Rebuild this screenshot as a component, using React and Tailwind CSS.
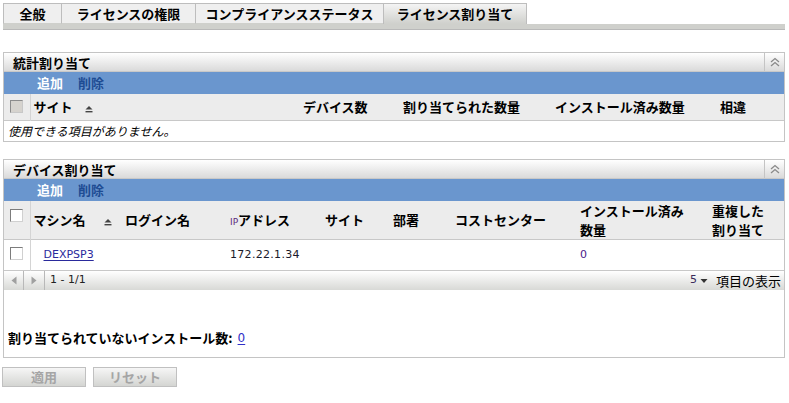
import React from "react";

const jp = "font-['Noto_Sans_CJK_JP','Noto_Sans',sans-serif]";
const latin = "font-['DejaVu_Sans',sans-serif]";

const SortIcon = ({ className = "" }) => (
  <svg width="8" height="8" viewBox="0 0 8 8" className={`inline-block ${className}`}>
    <polygon points="0.5,4.5 4,1 7.5,4.5" fill="#444" />
    <rect x="0.5" y="6" width="7" height="1.4" fill="#444" />
  </svg>
);

const CollapseButton = () => (
  <div className="w-[20px] h-full border-l border-[#c4c4c4] flex items-center justify-center">
    <svg width="10" height="10" viewBox="0 0 10 10">
      <polyline points="1,5 5,1.5 9,5" fill="none" stroke="#8a8a8a" strokeWidth="1.3" />
      <polyline points="1,9 5,5.5 9,9" fill="none" stroke="#8a8a8a" strokeWidth="1.3" />
    </svg>
  </div>
);

const Checkbox = ({ disabled }) => (
  <div
    className={`w-[13px] h-[13px] border ${
      disabled
        ? "border-[#8c8c8c] bg-[#d6d3ce] border-r-[#c8c8c8] border-b-[#c8c8c8]"
        : "border-[#7c7c7c] bg-white border-r-[#d0d0d0] border-b-[#d0d0d0]"
    }`}
  />
);

const PanelHeader = ({ title }) => (
  <>
    <div className="h-[19px] flex bg-gradient-to-b from-white to-[#dadada] border-b border-[#c8c8c8]">
      <div className="flex-1 pl-[9px] font-bold text-[13px] leading-[19px] text-black">{title}</div>
      <CollapseButton />
    </div>
    <div className="h-[22px] bg-[#6a96ce] flex items-center pl-[33px] gap-[15px] font-bold text-[13px]">
      <span className="text-white">追加</span>
      <span className="text-[#1e4c93]">削除</span>
    </div>
  </>
);

const Tab = ({ label, width, active }) => (
  <div
    className={`${width} flex items-center justify-center font-bold text-[13px] text-black border-t border-l border-[#bdbdbd] ${
      active
        ? "h-[21px] bg-gradient-to-b from-[#f4f4f4] to-[#cfd0cc] border-r"
        : "h-[21px] bg-[#efefef] border-b border-b-[#cfd0cc]"
    }`}
  >
    {label}
  </div>
);

export default function App() {
  return (
    <div className={`w-[789px] h-[403px] bg-white text-black ${jp} text-[13px] overflow-hidden`}>
      {/* tabs */}
      <div className="pt-[3px] pl-[3px] pr-[4px]">
        <div className="flex items-end">
          <Tab label="全般" width="w-[58px]" />
          <Tab label="ライセンスの権限" width="w-[134px]" />
          <Tab label="コンプライアンスステータス" width="w-[188px]" />
          <Tab label="ライセンス割り当て" width="w-[144px]" active />
        </div>
        <div className="h-[6px] bg-[#cfd0cc] border-b border-[#b9b9b9]" />
      </div>

      {/* 統計割り当て */}
      <div className="ml-[3px] mt-[22px] w-[782px] border border-[#c4c4c4]">
        <PanelHeader title="統計割り当て" />
        <table className="table-fixed border-collapse w-full">
          <colgroup>
            <col className="w-[26px]" />
            <col className="w-[270px]" />
            <col className="w-[100px]" />
            <col className="w-[152px]" />
            <col className="w-[165px]" />
            <col className="w-[67px]" />
          </colgroup>
          <thead>
            <tr className="h-[26px] bg-[#ececec] border-b border-[#c8c8c8] font-bold text-[13px]">
              <th className="border-r border-[#d4d4d4] pl-[6px]">
                <Checkbox disabled />
              </th>
              <th className="text-left font-bold pl-[3px]">
                サイト
                <SortIcon className="ml-[12px] align-[-1px]" />
              </th>
              <th className="text-left font-bold pl-[3px]">デバイス数</th>
              <th className="text-left font-bold pl-[3px]">割り当てられた数量</th>
              <th className="text-left font-bold pl-[3px]">インストール済み数量</th>
              <th className="text-left font-bold pl-[3px]">相違</th>
            </tr>
          </thead>
          <tbody>
            <tr className="h-[21px]">
              <td colSpan={6} className="pl-[4px] italic text-[12px]">
                使用できる項目がありません。
              </td>
            </tr>
          </tbody>
        </table>
      </div>

      {/* デバイス割り当て */}
      <div className="ml-[3px] mt-[17px] w-[782px] border border-[#c4c4c4]">
        <PanelHeader title="デバイス割り当て" />
        <table className="table-fixed border-collapse w-full">
          <colgroup>
            <col className="w-[26px]" />
            <col className="w-[92px]" />
            <col className="w-[105px]" />
            <col className="w-[95px]" />
            <col className="w-[68px]" />
            <col className="w-[62px]" />
            <col className="w-[125px]" />
            <col className="w-[123px]" />
            <col className="w-[84px]" />
          </colgroup>
          <thead>
            <tr className="h-[38px] bg-[#ececec] border-b border-[#c8c8c8] text-[13px]">
              <th className="border-r border-[#d4d4d4] pl-[6px] align-top pt-[8px]">
                <Checkbox />
              </th>
              <th className="text-left font-bold pl-[3px]">
                マシン名
                <SortIcon className="ml-[18px] align-[-1px]" />
              </th>
              <th className="text-left font-bold pl-[3px]">ログイン名</th>
              <th className="text-left font-bold pl-[3px]">
                <span className={`${latin} text-[9px] font-normal text-[#5a2a7a]`}>IP</span>アドレス
              </th>
              <th className="text-left font-bold pl-[3px]">サイト</th>
              <th className="text-left font-bold pl-[3px]">部署</th>
              <th className="text-left font-bold pl-[3px]">コストセンター</th>
              <th className="text-left font-bold pl-[3px] leading-[19px]">
                <div>インストール済み</div>
                <div>数量</div>
              </th>
              <th className="text-center font-bold pr-[8px] leading-[19px]">
                <div>重複した</div>
                <div>割り当て</div>
              </th>
            </tr>
          </thead>
          <tbody>
            <tr className="h-[31px] border-b border-[#c8c8c8]">
              <td className="border-r border-[#d4d4d4] pl-[6px] align-top pt-[7px]">
                <Checkbox />
              </td>
              <td className={`pl-[13px] ${latin} text-[11px]`}>
                <span className="text-[#2a2a9c] underline underline-offset-2">DEXPSP3</span>
              </td>
              <td />
              <td className={`pl-[3px] ${latin} text-[11px] tracking-[0.3px] text-[#1a1a2a]`}>172.22.1.34</td>
              <td />
              <td />
              <td />
              <td className={`pl-[3px] ${latin} text-[11px] text-[#4a1a8a]`}>0</td>
              <td />
            </tr>
          </tbody>
        </table>

        {/* pager */}
        <div className="h-[19px] flex items-center bg-gradient-to-b from-white to-[#d8d9d6]">
          <div className="w-[20px] h-full border-r border-[#b8b8b8] flex items-center justify-center">
            <svg width="6" height="9" viewBox="0 0 6 9">
              <polygon points="5.5,0.5 0.5,4.5 5.5,8.5" fill="#a0a0a0" />
            </svg>
          </div>
          <div className="w-[21px] h-full border-r border-[#b8b8b8] flex items-center justify-center">
            <svg width="6" height="9" viewBox="0 0 6 9">
              <polygon points="0.5,0.5 5.5,4.5 0.5,8.5" fill="#a0a0a0" />
            </svg>
          </div>
          <div className={`pl-[5px] flex-1 ${latin} text-[11px] text-[#222]`}>1 - 1/1</div>
          <div className="flex items-center pr-[3px]">
            <span className={`${latin} text-[11px] text-[#3a2a5a]`}>5</span>
            <svg width="8" height="6" viewBox="0 0 8 6" className="ml-[3px] mr-[8px]">
              <polygon points="0.5,1 7.5,1 4,5" fill="#333" />
            </svg>
            <span className="text-[13px]">項目の表示</span>
          </div>
        </div>

        <div className="h-[67px] flex items-end pb-[10px] pl-[4px]">
          <span className="font-bold text-[13px]">割り当てられていないインストール数:</span>
          <span className={`ml-[5px] ${latin} text-[12px] text-[#3030c8] underline underline-offset-2`}>0</span>
        </div>
      </div>

      {/* buttons */}
      <div className="flex gap-[7px] ml-[2px] mt-[9px]">
        <button className="w-[84px] h-[20px] border border-[#c0c0c0] bg-gradient-to-b from-[#f6f6f6] to-[#d4d5d2] text-[#a5a5a5] font-bold text-[13px] leading-[18px]">
          適用
        </button>
        <button className="w-[84px] h-[20px] border border-[#c0c0c0] bg-gradient-to-b from-[#f6f6f6] to-[#d4d5d2] text-[#a5a5a5] font-bold text-[13px] leading-[18px]">
          リセット
        </button>
      </div>
    </div>
  );
}
